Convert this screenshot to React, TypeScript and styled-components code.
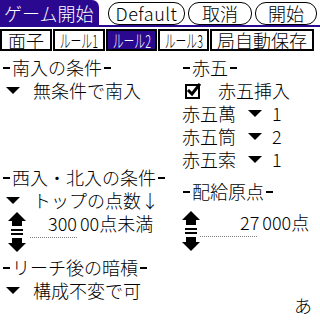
import styled, { createGlobalStyle } from 'styled-components';

const PURPLE = '#2a0890';

const GlobalStyle = createGlobalStyle`
	html,
	body {
		margin: 0;
		padding: 0;
		background: #fff;
	}

	body {
		font-family: 'Noto Sans CJK JP', 'Noto Sans', sans-serif;
		font-weight: 300;
		color: #000;
		overflow: hidden;
	}
`;

const Screen = styled.div`
	width: 320px;
	height: 320px;
	display: flex;
	flex-direction: column;
	overflow: hidden;
	font-size: 18px;
`;

const Header = styled.header`
	display: flex;
	height: 27px;
`;

const TitleTab = styled.h1`
	margin: 0;
	width: 99px;
	height: 27px;
	box-sizing: border-box;
	padding-left: 4px;
	background: ${PURPLE};
	color: #fff;
	border-top-right-radius: 7px;
	font-size: 18px;
	font-weight: 300;
	line-height: 27px;
	white-space: nowrap;
`;

const ButtonBar = styled.div`
	flex: 1;
	display: flex;
	gap: 3px;
	height: 27px;
	box-sizing: border-box;
	padding: 2px 0 0 9px;
	border-bottom: 2px solid ${PURPLE};
`;

const Button = styled.button<{ $width: number; $latin?: boolean }>`
	width: ${(p) => p.$width}px;
	height: 23px;
	box-sizing: border-box;
	padding: 0;
	border: 1px solid #000;
	border-radius: 11px;
	background: #fff;
	color: #000;
	font-family: 'Noto Sans CJK JP', sans-serif;
	font-size: 18px;
	font-weight: 300;
	line-height: 21px;
	letter-spacing: ${(p) => (p.$latin ? 0.5 : 0)}px;
	text-align: center;
`;

const TabRow = styled.nav`
	display: flex;
	gap: 1px;
	margin-top: 2px;
	height: 22px;
`;

const Tab = styled.div<{ $width: number; $selected?: boolean }>`
	width: ${(p) => p.$width}px;
	height: 22px;
	box-sizing: border-box;
	border: 2px solid #000;
	background: ${(p) => (p.$selected ? PURPLE : '#fff')};
	color: ${(p) => (p.$selected ? '#fff' : '#000')};
	display: flex;
	align-items: center;
	justify-content: center;
	font-size: 18px;
	line-height: 18px;
	white-space: nowrap;
	overflow: visible;
`;

const Squeeze = styled.span`
	display: inline-block;
	transform: scaleX(0.6);
	white-space: nowrap;
`;

const Main = styled.main`
	display: grid;
	grid-template-columns: 180px 1fr;
	padding-top: 5px;
`;

const Column = styled.section`
	display: flex;
	flex-direction: column;
`;

const Label = styled.div<{ $top?: number }>`
	display: flex;
	align-items: center;
	height: 23px;
	margin-top: ${(p) => p.$top ?? 0}px;
	padding-left: 3px;
	line-height: 23px;
	white-space: nowrap;

	&::before,
	&::after {
		content: '';
		display: inline-block;
		width: 7px;
		height: 2px;
		background: #000;
	}

	&::before {
		margin-right: 2px;
	}

	&::after {
		margin-left: 2px;
	}
`;

const Dropdown = styled.div`
	display: flex;
	align-items: center;
	gap: 13px;
	height: 23px;
	padding-left: 6px;
	line-height: 23px;
	white-space: nowrap;
`;

const CheckRow = styled.label`
	display: flex;
	align-items: center;
	gap: 16px;
	height: 23px;
	padding-left: 5px;
	line-height: 23px;
`;

const PickRow = styled.div`
	display: flex;
	align-items: center;
	height: 23px;
	padding-left: 2px;
	line-height: 23px;
`;

const PickName = styled.span`
	width: 54px;
	margin-right: 12px;
	white-space: nowrap;
`;

const PickValue = styled.span`
	margin-left: 10px;
`;

const SpinnerRow = styled.div<{ $left: number; $top?: number }>`
	display: flex;
	align-items: flex-start;
	height: 40px;
	margin-top: ${(p) => p.$top ?? 0}px;
	padding-left: ${(p) => p.$left}px;
`;

const Field = styled.div<{ $gap: number }>`
	display: flex;
	flex-direction: column;
	margin-left: ${(p) => p.$gap}px;
`;

const FieldValue = styled.div<{ $indent: number }>`
	padding-left: ${(p) => p.$indent}px;
	line-height: 23px;
	white-space: nowrap;
`;

const Gap = styled.span`
	display: inline-block;
	width: 3px;
`;

const Underline = styled.div<{ $width: number }>`
	width: ${(p) => p.$width}px;
	height: 1px;
	margin-top: 2px;
	background: repeating-linear-gradient(to right, #808080 0 1px, transparent 1px 2px);
`;

const Indicator = styled.div`
	align-self: flex-end;
	margin-top: 43px;
	padding-right: 8px;
	line-height: 23px;
`;

const Triangle = () => (
	<svg width="14" height="7" viewBox="0 0 14 7">
		<polygon points="0,0 14,0 7,7" fill="#000" />
	</svg>
);

const CheckBox = () => (
	<svg width="17" height="17" viewBox="0 0 17 17">
		<rect x="1" y="3" width="13" height="13" fill="none" stroke="#000" strokeWidth="2" />
		<polyline
			points="4,9 7,12 14,3"
			fill="none"
			stroke="#000"
			strokeWidth="3"
			strokeLinecap="square"
		/>
	</svg>
);

const Spinner = () => (
	<svg width="18" height="40" viewBox="0 0 18 40">
		<polygon points="9,0 18,9 0,9" fill="#000" />
		<rect x="4" y="9" width="10" height="5" fill="#000" />
		<rect x="3" y="17" width="12" height="2" fill="#000" />
		<rect x="3" y="21" width="12" height="2" fill="#000" />
		<rect x="4" y="26" width="10" height="5" fill="#000" />
		<polygon points="0,31 18,31 9,40" fill="#000" />
	</svg>
);

const tabs = [
	{ label: '面子', width: 52 },
	{ label: 'ルール1', width: 52, narrow: true },
	{ label: 'ルール2', width: 51, narrow: true, selected: true },
	{ label: 'ルール3', width: 51, narrow: true },
	{ label: '局自動保存', width: 104 },
];

const akaPicks = [
	{ name: '赤五萬', value: '1' },
	{ name: '赤五筒', value: '2' },
	{ name: '赤五索', value: '1' },
];

const App = () => {
	return (
		<>
			<GlobalStyle />
			<Screen>
				<Header>
					<TitleTab>ゲーム開始</TitleTab>
					<ButtonBar>
						<Button $width={77} $latin>
							Default
						</Button>
						<Button $width={64}>取消</Button>
						<Button $width={62}>開始</Button>
					</ButtonBar>
				</Header>

				<TabRow>
					{tabs.map((tab) => (
						<Tab key={tab.label} $width={tab.width} $selected={tab.selected}>
							{tab.narrow ? <Squeeze>{tab.label}</Squeeze> : tab.label}
						</Tab>
					))}
				</TabRow>

				<Main>
					<Column>
						<Label>南入の条件</Label>
						<Dropdown>
							<Triangle />
							無条件で南入
						</Dropdown>

						<Label $top={64}>西入・北入の条件</Label>
						<Dropdown>
							<Triangle />
							トップの点数↓
						</Dropdown>
						<SpinnerRow $left={8}>
							<Spinner />
							<Field $gap={4}>
								<FieldValue $indent={18}>
									300
									<Gap />
									00点未満
								</FieldValue>
								<Underline $width={47} />
							</Field>
						</SpinnerRow>

						<Label $top={4}>リーチ後の暗槓</Label>
						<Dropdown>
							<Triangle />
							構成不変で可
						</Dropdown>
					</Column>

					<Column>
						<Label>赤五</Label>
						<CheckRow>
							<CheckBox />
							赤五挿入
						</CheckRow>
						{akaPicks.map((pick) => (
							<PickRow key={pick.name}>
								<PickName>{pick.name}</PickName>
								<Triangle />
								<PickValue>{pick.value}</PickValue>
							</PickRow>
						))}

						<Label $top={9}>配給原点</Label>
						<SpinnerRow $left={2} $top={8}>
							<Spinner />
							<Field $gap={0}>
								<FieldValue $indent={40}>
									27
									<Gap />
									000点
								</FieldValue>
								<Underline $width={58} />
							</Field>
						</SpinnerRow>

						<Indicator>あ</Indicator>
					</Column>
				</Main>
			</Screen>
		</>
	);
};

export default App;
